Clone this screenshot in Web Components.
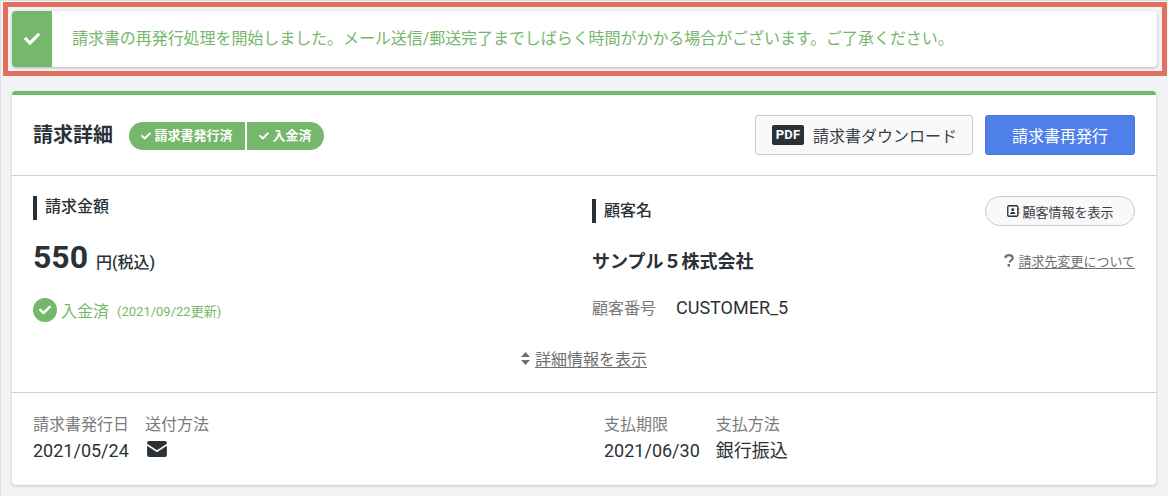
<!DOCTYPE html>
<html lang="ja"><head><meta charset="utf-8">
<style>
html,body{margin:0;padding:0}
body{width:1168px;height:496px;overflow:hidden;background:#f2f3f5;font-family:Roboto,"Noto Sans CJK JP",sans-serif;color:#2a3238;box-sizing:border-box;border:1px solid #e0e0e2;border-bottom:0;border-right:0}
</style></head><body>
<app-page>
  <alert-box>請求書の再発行処理を開始しました。メール送信/郵送完了までしばらく時間がかかる場合がございます。ご了承ください。</alert-box>
  <invoice-card></invoice-card>
</app-page>
<script>
const CHECK='<svg viewBox="0 0 512 512" fill="currentColor"><path d="M173.9 439.4L7.5 273c-10-10-10-26.200 0-36.200l36.200-36.200c10-10 26.200-10 36.200 0L192 312.700 432.100 72.600c10-10 26.200-10 36.200 0l36.200 36.200c10 10 10 26.200 0 36.200L210.100 439.400c-10 10-26.200 10-36.200 0z"/></svg>';
function def(name,html){customElements.define(name,class extends HTMLElement{constructor(){super();this.attachShadow({mode:'open'}).innerHTML=html}})}
def('app-page',`<style>:host{display:block}</style><slot></slot>`);
def('alert-box',`<style>
:host{display:block;margin:1px 1px 0 2px;border:5px solid #e36f5f;padding:4px 5px 4px 4px}
.a{display:flex;height:56px;background:#fff;border-radius:4px;box-shadow:0 1px 3px rgba(0,0,0,.25);overflow:hidden}
.i{width:40px;background:#75b76b;color:#fff;display:flex;align-items:center;justify-content:center}
.i svg{width:16px;height:16px}
.t{margin-left:20px;align-self:center;font-size:16px;letter-spacing:-.06px;color:#75b76b;line-height:22px}
</style><div class="a"><div class="i">${CHECK}</div><div class="t"><slot></slot></div></div>`);
def('status-badge',`<style>
:host{display:flex;align-items:center;justify-content:center;gap:3px;height:28px;background:#75b76b;color:#fff;font-size:13px;font-weight:700;line-height:26px}
svg{width:10px;height:10px}
</style>${CHECK}<slot></slot>`);
def('field-title',`<style>
:host{display:block;border-left:4px solid #2a3238;padding-left:8px;font-size:16px;font-weight:500;line-height:22px;padding-bottom:2px}
:host([centered]){line-height:24px;padding-bottom:0}
</style><slot></slot>`);
def('meta-item',`<style>
:host{display:block}
.l{font-size:16px;color:#7b7b7b;line-height:24px}
.v{font-size:18px;line-height:26px;margin-top:1px;height:26px;display:flex;align-items:center}
</style><div class="l"><slot name="label"></slot></div><div class="v"><slot></slot></div>`);
def('invoice-card',`<style>
:host{display:block;margin:15px 12px 0 11px;background:#fff;border-top:4px solid #75b76b;border-radius:4px;box-shadow:0 1px 3px rgba(0,0,0,.2);height:394px;box-sizing:border-box}
.head{height:81px;box-sizing:border-box;border-bottom:1px solid #cfcfcf;display:flex;align-items:center;padding:0 21px}
h2{margin:0;font-size:20px;font-weight:700;line-height:24px}
.badges{display:flex;gap:2px;margin-left:16px;margin-top:1px}
.b1{width:116px;border-radius:14px 0 0 14px}
.b2{width:77px;border-radius:0 14px 14px 0}
.btns{margin-left:auto;display:flex;gap:12px}
.btn{height:40px;box-sizing:border-box;border-radius:3px;display:flex;align-items:center;justify-content:center;font-size:16px}
.pdf{width:218px;border:1px solid #c9c9c9;background:#f9f9f9;color:#3a4046;gap:9px}
.pdf b{display:block;width:32px;height:20px;background:#2a3238;color:#fff;border-radius:2px;font-size:13px;line-height:20px;text-align:center;font-weight:700;letter-spacing:.2px;margin-left:1px}
.re{width:150px;background:#4f7fe8;border:1px solid #4873d6;color:#fff}
.main{height:217px;box-sizing:border-box;border-bottom:1px solid #cfcfcf;padding:20px 21px 0;display:flex;flex-direction:column}
.cols{display:grid;grid-template-columns:559px 1fr}
.amount{display:flex;align-items:baseline;margin-top:13px;height:48px;line-height:48px}
.amount b{font-size:32px;font-weight:700}
.amount span{font-size:16px;font-weight:500;margin-left:8px}
.paid{display:flex;align-items:center;margin-top:17px;color:#75b76b;height:24px}
.dot{width:24px;height:24px;border-radius:50%;background:#75b76b;color:#fff;display:flex;align-items:center;justify-content:center;margin-right:4px}
.dot svg{width:12px;height:12px}
.paid .s{font-size:16px}
.paid .d{font-size:13px;margin-left:8px}
.cust-top{display:flex;justify-content:space-between;align-items:center;height:30px}
.pill{width:150px;height:30px;box-sizing:border-box;border:1px solid #c9c9c9;border-radius:15px;background:#f9f9f9;font-size:13px;display:flex;align-items:center;justify-content:center;gap:2px;color:#3a4046}
.pill svg{width:14px;height:14px}
.name-row{display:flex;justify-content:space-between;align-items:center;margin-top:22px;height:24px}
.name{font-size:18px;font-weight:700}
.help{font-size:13px;color:#6f6f6f;display:flex;align-items:center;gap:4px}
.help u{text-underline-offset:2px}
.help svg{width:10px;height:13px}
.no{display:flex;align-items:center;margin-top:23px;height:24px}
.no span{font-size:16px;color:#7b7b7b;width:84px}
.no em{font-style:normal;font-size:18px}
.more{display:flex;align-items:center;justify-content:center;gap:5px;color:#6f6f6f;font-size:16px;margin-top:24px;height:24px}
.more u{text-underline-offset:2px}
.more svg{width:9px;height:13px}
.foot{display:grid;grid-template-columns:571px 1fr;padding:20px 21px 0}
.group{display:flex;gap:16px}
.mail{width:20px;height:16px;margin:-4px 0 0 2px}
</style>
<div class="head"><h2>請求詳細</h2>
 <div class="badges"><status-badge class="b1">請求書発行済</status-badge><status-badge class="b2">入金済</status-badge></div>
 <div class="btns"><div class="btn pdf"><b>PDF</b><span>請求書ダウンロード</span></div><div class="btn re">請求書再発行</div></div>
</div>
<div class="main">
 <div class="cols">
  <div>
   <field-title>請求金額</field-title>
   <div class="amount"><b>550</b><span>円(税込)</span></div>
   <div class="paid"><div class="dot">${CHECK}</div><span class="s">入金済</span><span class="d">(2021/09/22更新)</span></div>
  </div>
  <div>
   <div class="cust-top"><field-title centered>顧客名</field-title><div class="pill"><svg viewBox="0 0 16 16"><rect x="2" y="2" width="11.500" height="12" rx="1.500" fill="none" stroke="#2a3238" stroke-width="1.500"/><circle cx="7.700" cy="6.500" r="1.700" fill="#2a3238"/><path d="M4.500 11.500c.5-2 1.500-2.500 3.200-2.500s2.700.5 3.200 2.500z" fill="#2a3238"/><path d="M14.500 5v2M14.500 9v2" stroke="#2a3238"/></svg>顧客情報を表示</div></div>
   <div class="name-row"><span class="name">サンプル５株式会社</span><span class="help"><svg viewBox="0 0 10 13" fill="none"><path d="M1.300 4C1.500 2.300 3 1.200 5 1.200c2.200 0 3.700 1.200 3.700 2.900 0 2.300-3 2.300-3 4.300" stroke="#6f6f6f" stroke-width="2.200"/><rect x="3.600" y="10" width="2.400" height="2.600" fill="#6f6f6f"/></svg><u>請求先変更について</u></span></div>
   <div class="no"><span>顧客番号</span><em>CUSTOMER_5</em></div>
  </div>
 </div>
 <div class="more"><svg viewBox="0 0 9 13" fill="#6f6f6f"><path d="M4.500 0L9 5H0zM4.500 13L0 8h9z"/></svg><u>詳細情報を表示</u></div>
</div>
<div class="foot">
 <div class="group"><meta-item><span slot="label">請求書発行日</span>2021/05/24</meta-item><meta-item><span slot="label">送付方法</span><svg class="mail" viewBox="0 0 21 17"><path fill="#2a3238" d="M2 0h17a2 2 0 0 1 2 2v.8l-10.500 7L0 2.800V2a2 2 0 0 1 2-2zM0 5l10.500 7L21 5v10a2 2 0 0 1-2 2H2a2 2 0 0 1-2-2z"/></svg></meta-item></div>
 <div class="group"><meta-item><span slot="label">支払期限</span>2021/06/30</meta-item><meta-item><span slot="label">支払方法</span>銀行振込</meta-item></div>
</div>`);
</script>
</body></html>
